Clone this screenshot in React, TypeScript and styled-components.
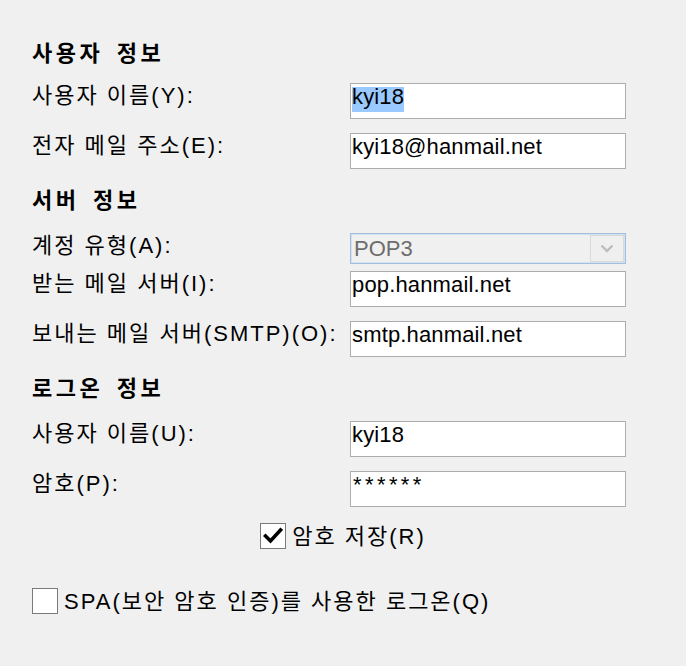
import React from "react";
import styled, { createGlobalStyle } from "styled-components";

const GlobalStyle = createGlobalStyle`
  html, body { margin: 0; padding: 0; background: #f0f0f0; }
  body { font-family: "Liberation Sans", "Noto Sans CJK KR", sans-serif; color: #000; }
`;

const Page = styled.div`
  width: 686px;
  height: 666px;
  box-sizing: border-box;
  background: #f0f0f0;
  padding-top: 42px;
  display: flex;
  flex-direction: column;
  overflow: hidden;
`;

const Indented = styled.div<{ $mt?: number }>`
  padding-left: 32px;
  margin-top: ${(p) => p.$mt ?? 0}px;
  display: flex;
  flex-direction: column;
`;

const Heading = styled.div<{ $mt?: number }>`
  margin-top: ${(p) => p.$mt ?? 0}px;
  font-size: 22px;
  font-weight: 700;
  line-height: 24px;
  letter-spacing: 3.5px;
  word-spacing: 4px;
`;

const Row = styled.div<{ $mt?: number }>`
  display: flex;
  align-items: flex-start;
  margin-top: ${(p) => p.$mt ?? 0}px;
`;

const Label = styled.div`
  flex: none;
  width: 318px;
  padding-top: 1px;
  font-size: 22px;
  line-height: 24px;
  letter-spacing: 2px;
  white-space: nowrap;
`;

const Field = styled.div<{ $secret?: boolean }>`
  box-sizing: border-box;
  width: 276px;
  height: 36px;
  border: 1px solid #adadad;
  background: #fff;
  padding: 3px 2px 0 1px;
  font-family: "Liberation Sans", sans-serif;
  font-size: 22px;
  line-height: 19px;
  white-space: nowrap;
  overflow: hidden;
  letter-spacing: ${(p) => (p.$secret ? "3.4px" : "0.15px")};
  padding-left: ${(p) => (p.$secret ? 2 : 1)}px;
`;

const Selected = styled.span`
  display: inline-block;
  height: 25px;
  line-height: 19px;
  background: #99c9ff;
`;

const Combo = styled.div`
  box-sizing: border-box;
  width: 276px;
  height: 31px;
  border: 1px solid #a3bedb;
  box-shadow: inset 0 0 0 1px #d3e2f2;
  background: #f0f0f0;
  display: flex;
  align-items: stretch;
  padding: 1px;
`;

const ComboText = styled.div`
  flex: 1;
  padding: 4px 0 0 2px;
  font-family: "Liberation Sans", sans-serif;
  font-size: 22px;
  line-height: 19px;
  color: #6d6d6d;
`;

const ComboButton = styled.div`
  box-sizing: border-box;
  width: 34px;
  border: 1px solid #d9d9d9;
  background: #efefef;
  display: flex;
  align-items: center;
  justify-content: center;
`;

const CheckRow = styled.div<{ $mt?: number; $center?: boolean }>`
  display: flex;
  align-items: center;
  justify-content: ${(p) => (p.$center ? "center" : "flex-start")};
  gap: 6px;
  margin-top: ${(p) => p.$mt ?? 0}px;
`;

const Box = styled.div`
  box-sizing: border-box;
  width: 26px;
  height: 26px;
  border: 1px solid #7a7a7a;
  background: #fff;
  display: flex;
  align-items: center;
  justify-content: center;
  flex: none;
`;

const CheckText = styled.div`
  font-size: 22px;
  line-height: 24px;
  letter-spacing: 2px;
  padding-top: 2px;
  white-space: nowrap;
`;

const Chevron = () => (
  <svg width="14" height="9" viewBox="0 0 14 9">
    <polyline points="1.5,1.5 7,7 12.5,1.5" fill="none" stroke="#bdbdbd" strokeWidth="2.4" />
  </svg>
);

const Tick = () => (
  <svg width="20" height="18" viewBox="0 0 20 18">
    <polyline points="2.5,9 7.5,14 17.5,3" fill="none" stroke="#000" strokeWidth="3.6" strokeLinecap="square" />
  </svg>
);

export default function App() {
  return (
    <>
      <GlobalStyle />
      <Page>
        <Indented>
          <Heading>사용자 정보</Heading>
          <Row $mt={17}>
            <Label>사용자 이름(Y):</Label>
            <Field><Selected>kyi18</Selected></Field>
          </Row>
          <Row $mt={14}>
            <Label>전자 메일 주소(E):</Label>
            <Field>kyi18@hanmail.net</Field>
          </Row>

          <Heading $mt={20}>서버 정보</Heading>
          <Row $mt={20}>
            <Label>계정 유형(A):</Label>
            <Combo>
              <ComboText>POP3</ComboText>
              <ComboButton><Chevron /></ComboButton>
            </Combo>
          </Row>
          <Row $mt={7}>
            <Label>받는 메일 서버(I):</Label>
            <Field>pop.hanmail.net</Field>
          </Row>
          <Row $mt={14}>
            <Label>보내는 메일 서버(SMTP)(O):</Label>
            <Field>smtp.hanmail.net</Field>
          </Row>

          <Heading $mt={20}>로그온 정보</Heading>
          <Row $mt={20}>
            <Label>사용자 이름(U):</Label>
            <Field>kyi18</Field>
          </Row>
          <Row $mt={14}>
            <Label>암호(P):</Label>
            <Field $secret>******</Field>
          </Row>
        </Indented>

        <CheckRow $mt={16} $center>
          <Box><Tick /></Box>
          <CheckText>암호 저장(R)</CheckText>
        </CheckRow>

        <Indented $mt={39}>
          <CheckRow>
            <Box />
            <CheckText>SPA(보안 암호 인증)를 사용한 로그온(Q)</CheckText>
          </CheckRow>
        </Indented>
      </Page>
    </>
  );
}
